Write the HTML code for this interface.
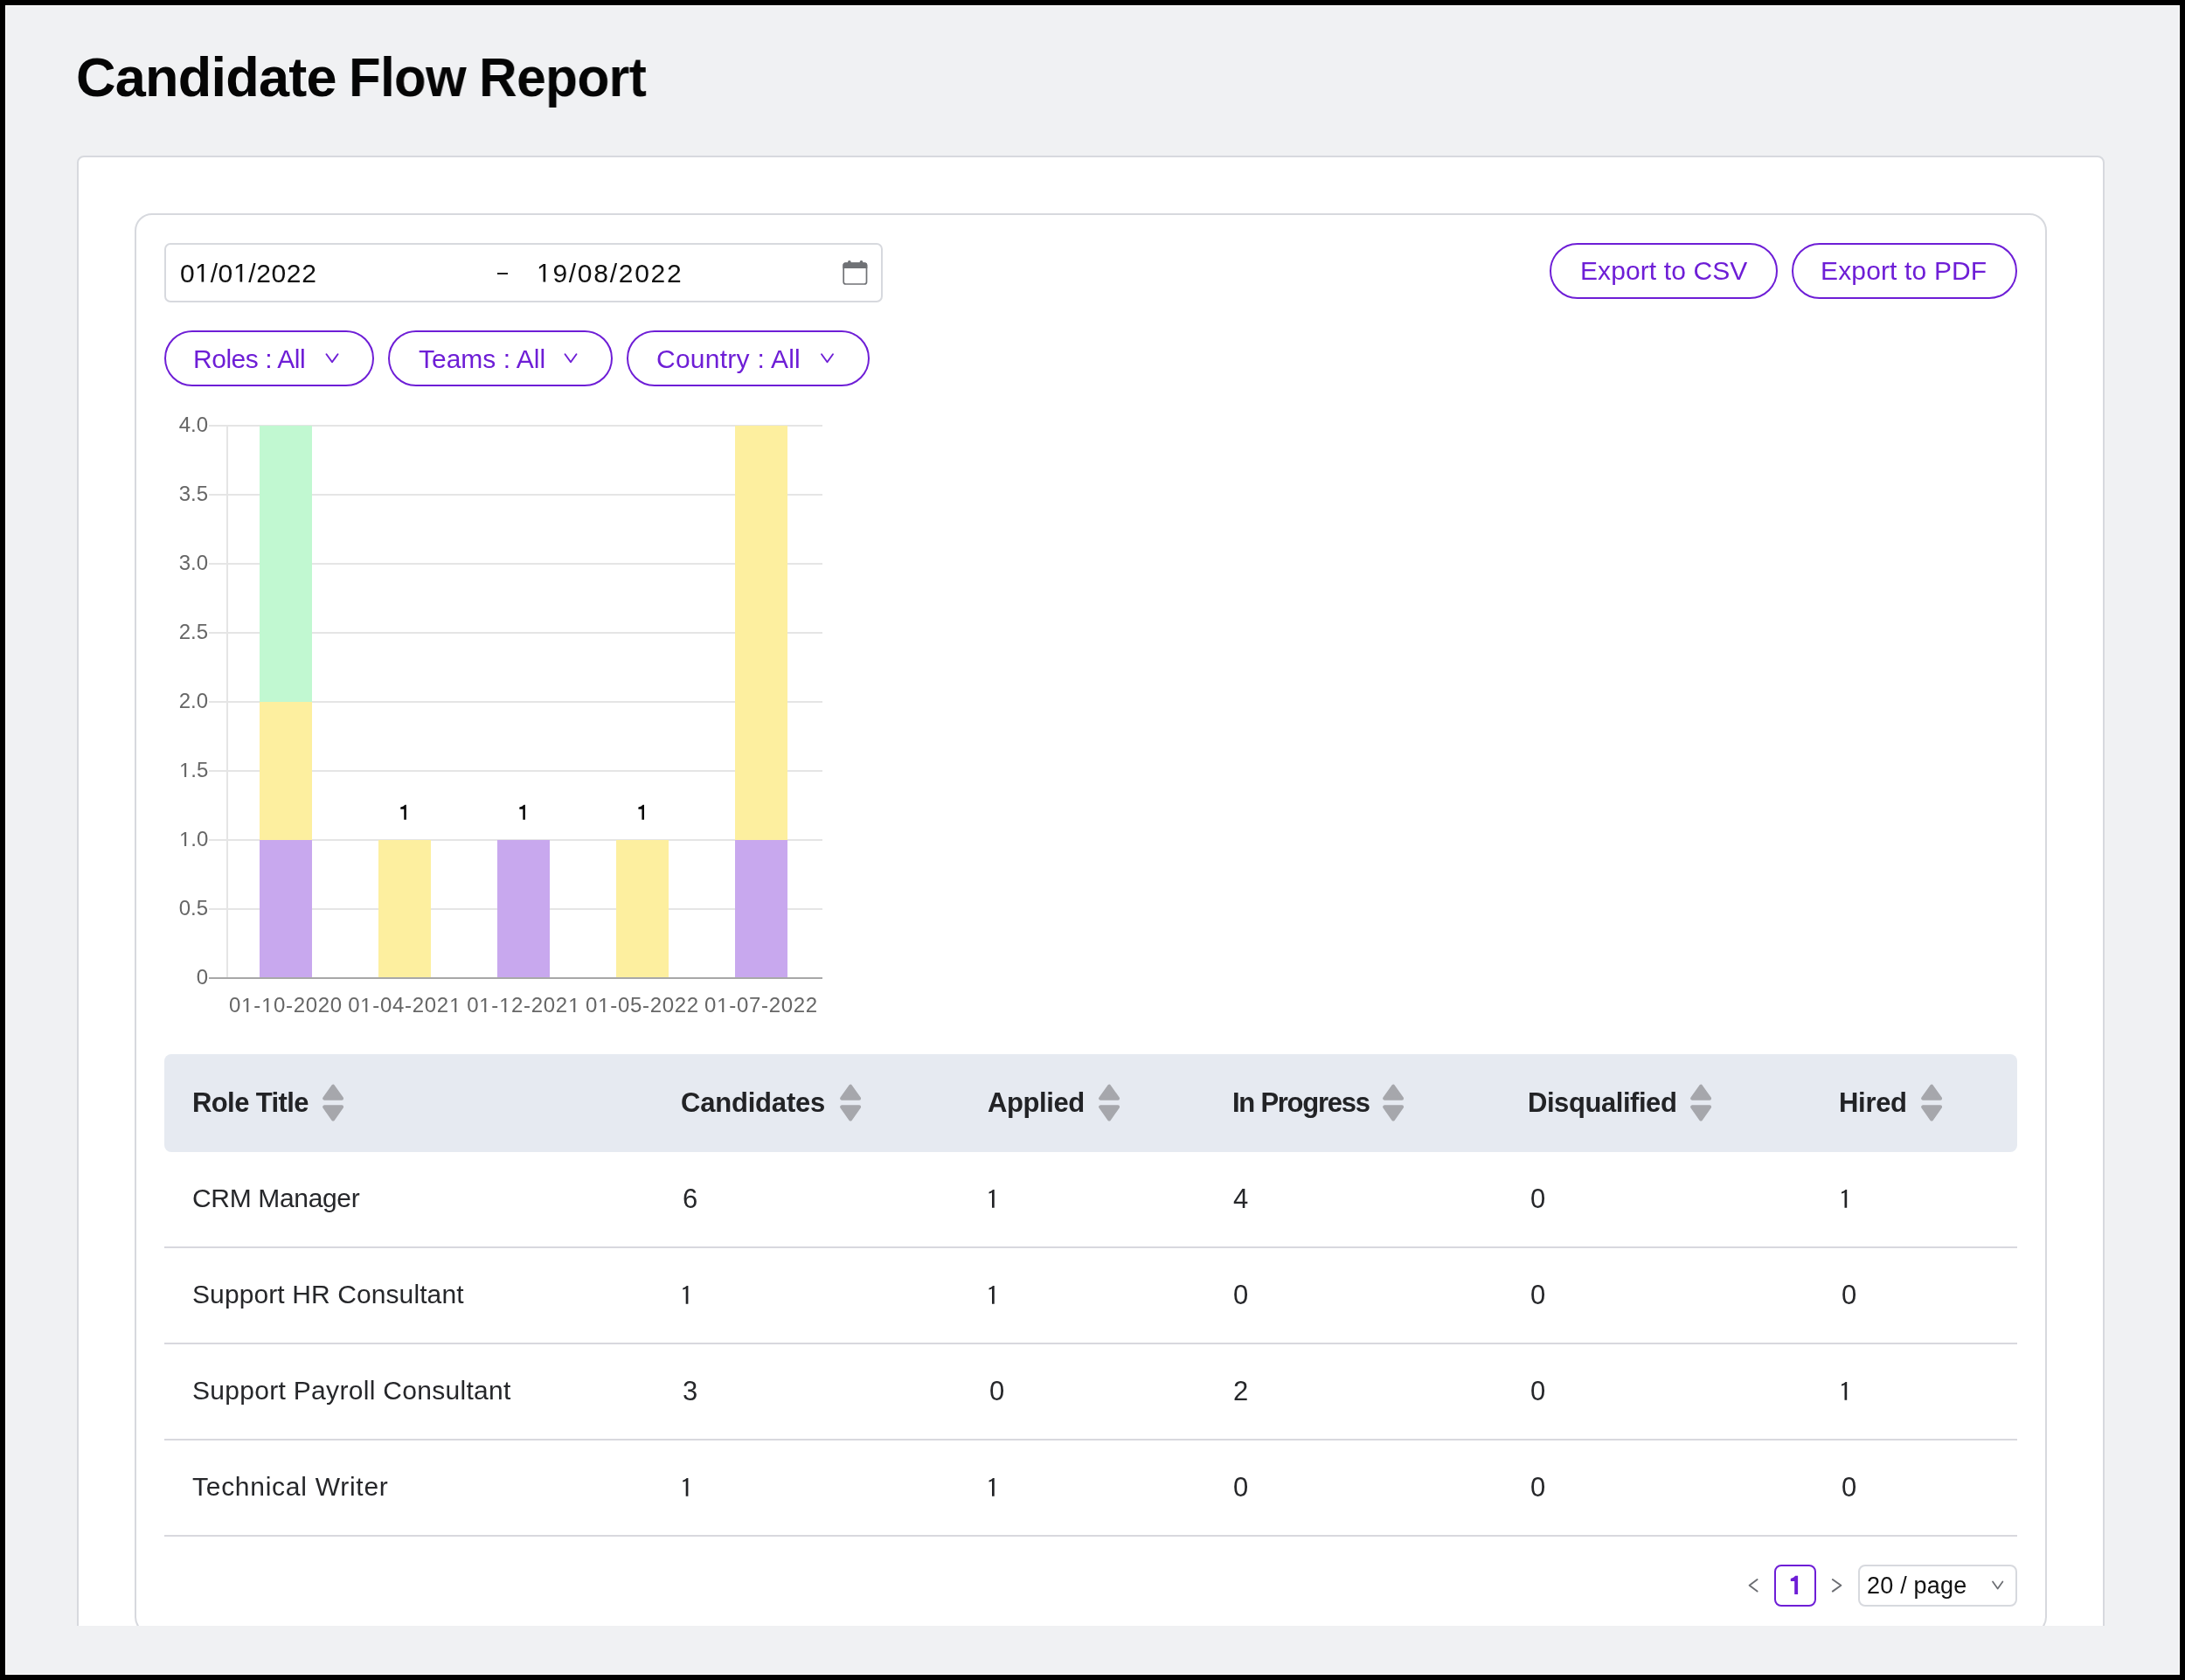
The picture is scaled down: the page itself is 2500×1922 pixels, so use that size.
<!DOCTYPE html>
<html><head><meta charset="utf-8">
<style>
html,body{margin:0;padding:0;}
body{width:2500px;height:1922px;background:#000;position:relative;overflow:hidden;font-family:"Liberation Sans",sans-serif;}
.page{position:absolute;left:6px;top:6px;width:2488px;height:1910px;background:#f0f1f3;border:1px solid #fff;box-sizing:border-box;}
.clip{position:absolute;left:0;top:0;width:2500px;height:1860px;overflow:hidden;}
.t{position:absolute;white-space:nowrap;line-height:1;will-change:transform;}
.outer{position:absolute;left:88px;top:178px;width:2320px;height:1800px;border:2px solid #d7d9de;border-radius:8px;background:#fff;box-sizing:border-box;}
.inner{position:absolute;left:154px;top:244px;width:2188px;height:1626px;border:2px solid #d7d9de;border-radius:20px;background:#fff;box-sizing:border-box;}
.box{position:absolute;box-sizing:border-box;}
.pill{position:absolute;border:2px solid #6e1ed6;border-radius:40px;box-sizing:border-box;}
.p{color:#6e1ed6;font-size:30px;}
.hd{font-size:31px;font-weight:bold;color:#222326;}
.cell{font-size:30px;color:#26272a;}
.one{display:inline-block;width:0.5562em;height:0.688em;vertical-align:baseline;fill:currentColor;}
#d1 .one{margin-right:0.64px;}
#d2 .one{margin-right:1.73px;}
.num{font-size:31px;}
.xl{font-size:24px;color:#666;letter-spacing:0.7px;transform:translateX(-50%);}
.xl .one{margin-right:0.7px;}
.yl{font-size:24px;color:#666;}
.tw{font-size:63px;font-weight:bold;color:#050505;letter-spacing:-0.6px;transform-origin:0 0;}
.sep{position:absolute;left:188px;width:2120px;height:2px;background:#d8d8de;}
</style></head>
<body>
<div class="page"></div>
<div class="t tw" id="tw1" style="left:87px;top:57px;letter-spacing:-0.75px;">Candidate</div><div class="t tw" id="tw2" style="left:398.9px;top:57px;transform:scaleX(0.95);">Flow</div><div class="t tw" id="tw3" style="left:548.1px;top:57px;transform:scaleX(0.959);">Report</div>
<div class="clip">
  <div class="outer"></div>
  <div class="inner"></div>

  <!-- date range input -->
  <div class="box" style="left:188px;top:278px;width:822px;height:68px;border:2px solid #d7d9de;border-radius:7px;background:#fff;"></div>
  <div class="t" id="d1" style="left:206px;top:297.5px;letter-spacing:0.64px;font-size:30px;color:#111;">0<svg class="one" viewBox="0 0 1139 1409"><path d="M515,1409 L696,1409 L696,0 L530,0 L197,229 L197,399 L515,172 Z"/></svg>/0<svg class="one" viewBox="0 0 1139 1409"><path d="M515,1409 L696,1409 L696,0 L530,0 L197,229 L197,399 L515,172 Z"/></svg>/2022</div>
  <div class="box" style="left:569px;top:312px;width:12px;height:2px;background:#222;"></div>
  <div class="t" id="d2" style="left:614px;top:297.5px;letter-spacing:1.73px;font-size:30px;color:#111;"><svg class="one" viewBox="0 0 1139 1409"><path d="M515,1409 L696,1409 L696,0 L530,0 L197,229 L197,399 L515,172 Z"/></svg>9/08/2022</div>
  <svg class="box" style="left:962px;top:296px;" width="32" height="32" viewBox="0 0 32 32">
    <rect x="3.2" y="5.2" width="26.3" height="23.8" rx="2.6" ry="2.6" fill="none" stroke="#707276" stroke-width="1.7"/>
    <path d="M2.4,11 L2.4,7.4 Q2.4,4.4 5.4,4.4 L27.3,4.4 Q30.3,4.4 30.3,7.4 L30.3,11 Z" fill="#707276"/>
    <rect x="8.05" y="2" width="3.5" height="5" rx="1.5" fill="#707276"/>
    <rect x="21.75" y="2" width="3.5" height="5" rx="1.5" fill="#707276"/>
  </svg>

  <!-- export buttons -->
  <div class="pill" style="left:1773px;top:278px;width:261px;height:64px;"></div>
  <div class="t p" id="csv" style="left:1807.5px;top:295px;letter-spacing:0.1px;">Export to CSV</div>
  <div class="pill" style="left:2050px;top:278px;width:258px;height:64px;"></div>
  <div class="t p" id="pdf" style="left:2083px;top:295px;letter-spacing:0.15px;">Export to PDF</div>

  <!-- filter pills -->
  <div class="pill" style="left:188px;top:378px;width:240px;height:64px;"></div>
  <div class="t p" id="roles" style="left:221px;top:395.5px;letter-spacing:-0.47px;">Roles : All</div>
  <div class="pill" style="left:444px;top:378px;width:257px;height:64px;"></div>
  <div class="t p" id="teams" style="left:479px;top:395.5px;">Teams : All</div>
  <div class="pill" style="left:717px;top:378px;width:278px;height:64px;"></div>
  <div class="t p" id="country" style="left:751px;top:395.5px;letter-spacing:0.25px;">Country : All</div>
  <svg class="box" style="left:0;top:0;" width="1000" height="450" viewBox="0 0 1000 450">
    <g fill="none" stroke="#6e1ed6" stroke-width="1.9" stroke-linecap="round" stroke-linejoin="round">
      <polyline points="373.5,405.2 380,414.3 386.5,405.2"/>
      <polyline points="646.5,405.2 653,414.3 659.5,405.2"/>
      <polyline points="940,405.2 946.5,414.3 953,405.2"/>
    </g>
  </svg>

  <!-- chart -->
  <svg class="box" style="left:0;top:0;" width="1000" height="1200" viewBox="0 0 1000 1200">
    <g stroke="#e5e5e5" stroke-width="2">
      <line x1="239" y1="487" x2="941" y2="487"/>
      <line x1="239" y1="566" x2="941" y2="566"/>
      <line x1="239" y1="645" x2="941" y2="645"/>
      <line x1="239" y1="724" x2="941" y2="724"/>
      <line x1="239" y1="803" x2="941" y2="803"/>
      <line x1="239" y1="882" x2="941" y2="882"/>
      <line x1="239" y1="961" x2="941" y2="961"/>
      <line x1="239" y1="1040" x2="941" y2="1040"/>
      <line x1="260" y1="486" x2="260" y2="1119"/>
    </g>
    <g>
      <rect x="297" y="487" width="60" height="316" fill="#c1f8d1"/>
      <rect x="297" y="803" width="60" height="158" fill="#fdef9f"/>
      <rect x="297" y="961" width="60" height="158" fill="#c8a8ee"/>
      <rect x="433" y="961" width="60" height="158" fill="#fdef9f"/>
      <rect x="569" y="961" width="60" height="158" fill="#c8a8ee"/>
      <rect x="705" y="961" width="60" height="158" fill="#fdef9f"/>
      <rect x="841" y="487" width="60" height="474" fill="#fdef9f"/>
      <rect x="841" y="961" width="60" height="158" fill="#c8a8ee"/>
    </g>
    <line x1="239" y1="1119" x2="941" y2="1119" stroke="#a8a8a8" stroke-width="2"/>
    <g font-family="Liberation Sans" font-size="24" fill="#666" text-anchor="end">
      <text x="238" y="494">4.0</text>
      <text x="238" y="573">3.5</text>
      <text x="238" y="652">3.0</text>
      <text x="238" y="731">2.5</text>
      <text x="238" y="810">2.0</text>
      <text x="238" y="1047">0.5</text>
      <text x="238" y="1126">0</text>
    </g>

    <g fill="#0a0a0a">
      <path transform="translate(457.95,920.8)" d="M4.3,16.9 L6.9,16.9 L6.9,0 L5.4,0 Q3.9,2.2 0.3,2.7 L0.3,4.9 L4.3,4.9 Z"/>
      <path transform="translate(594.0,920.8)" d="M4.3,16.9 L6.9,16.9 L6.9,0 L5.4,0 Q3.9,2.2 0.3,2.7 L0.3,4.9 L4.3,4.9 Z"/>
      <path transform="translate(730.1,920.8)" d="M4.3,16.9 L6.9,16.9 L6.9,0 L5.4,0 Q3.9,2.2 0.3,2.7 L0.3,4.9 L4.3,4.9 Z"/>
    </g>
  </svg>

  <!-- chart labels html -->
  <div class="t xl" style="left:327px;top:1137.7px;">0<svg class="one" viewBox="0 0 1139 1409"><path d="M515,1409 L696,1409 L696,0 L530,0 L197,229 L197,399 L515,172 Z"/></svg>-<svg class="one" viewBox="0 0 1139 1409"><path d="M515,1409 L696,1409 L696,0 L530,0 L197,229 L197,399 L515,172 Z"/></svg>0-2020</div>
  <div class="t xl" style="left:463px;top:1137.7px;">0<svg class="one" viewBox="0 0 1139 1409"><path d="M515,1409 L696,1409 L696,0 L530,0 L197,229 L197,399 L515,172 Z"/></svg>-04-202<svg class="one" viewBox="0 0 1139 1409"><path d="M515,1409 L696,1409 L696,0 L530,0 L197,229 L197,399 L515,172 Z"/></svg></div>
  <div class="t xl" style="left:599px;top:1137.7px;">0<svg class="one" viewBox="0 0 1139 1409"><path d="M515,1409 L696,1409 L696,0 L530,0 L197,229 L197,399 L515,172 Z"/></svg>-<svg class="one" viewBox="0 0 1139 1409"><path d="M515,1409 L696,1409 L696,0 L530,0 L197,229 L197,399 L515,172 Z"/></svg>2-202<svg class="one" viewBox="0 0 1139 1409"><path d="M515,1409 L696,1409 L696,0 L530,0 L197,229 L197,399 L515,172 Z"/></svg></div>
  <div class="t xl" style="left:735px;top:1137.7px;">0<svg class="one" viewBox="0 0 1139 1409"><path d="M515,1409 L696,1409 L696,0 L530,0 L197,229 L197,399 L515,172 Z"/></svg>-05-2022</div>
  <div class="t xl" style="left:871px;top:1137.7px;">0<svg class="one" viewBox="0 0 1139 1409"><path d="M515,1409 L696,1409 L696,0 L530,0 L197,229 L197,399 L515,172 Z"/></svg>-07-2022</div>
  <div class="t yl" style="right:2262px;top:947.7px;"><svg class="one" viewBox="0 0 1139 1409"><path d="M515,1409 L696,1409 L696,0 L530,0 L197,229 L197,399 L515,172 Z"/></svg>.0</div>
  <div class="t yl" style="right:2262px;top:868.7px;"><svg class="one" viewBox="0 0 1139 1409"><path d="M515,1409 L696,1409 L696,0 L530,0 L197,229 L197,399 L515,172 Z"/></svg>.5</div>
  <!-- table header -->
  <div class="box" style="left:188px;top:1206px;width:2120px;height:112px;background:#e6eaf1;border-radius:8px;"></div>
  <div class="t hd" id="h1" style="left:220px;top:1246px;letter-spacing:-0.6px;">Role Title</div>
  <div class="t hd" id="h2" style="left:779px;top:1246px;letter-spacing:-0.2px;">Candidates</div>
  <div class="t hd" id="h3" style="left:1130px;top:1246px;letter-spacing:-0.4px;">Applied</div>
  <div class="t hd" id="h4" style="left:1410px;top:1246px;letter-spacing:-1.26px;">In Progress</div>
  <div class="t hd" id="h5" style="left:1748px;top:1246px;letter-spacing:-0.44px;">Disqualified</div>
  <div class="t hd" id="h6" style="left:2104px;top:1246px;letter-spacing:-0.3px;">Hired</div>
  <svg class="box" style="left:0;top:1200px;" width="2500" height="120" viewBox="0 1200 2500 120">
    <defs>
      <g id="sorter">
        <polygon points="2.1,15.7 22.1,15.7 12.1,1.6" fill="#a6a7ac" stroke="#a6a7ac" stroke-width="4" stroke-linejoin="round"/>
        <polygon points="2.1,25.3 22.1,25.3 12.1,39.5" fill="#a6a7ac" stroke="#a6a7ac" stroke-width="4" stroke-linejoin="round"/>
      </g>
    </defs>
    <use href="#sorter" x="369" y="1241"/>
    <use href="#sorter" x="961" y="1241"/>
    <use href="#sorter" x="1257" y="1241"/>
    <use href="#sorter" x="1582" y="1241"/>
    <use href="#sorter" x="1934" y="1241"/>
    <use href="#sorter" x="2198" y="1241"/>
  </svg>

  <!-- rows -->
  <div class="t cell" style="left:220px;top:1356px;letter-spacing:-0.34px;">CRM Manager</div>
  <div class="t cell num" style="left:781px;top:1356px;">6</div>
  <div class="t cell num" style="left:1411px;top:1356px;">4</div>
  <div class="t cell num" style="left:1751px;top:1356px;">0</div>
  <div class="sep" style="top:1426px;"></div>

  <div class="t cell" style="left:220px;top:1466px;letter-spacing:0.1px;">Support HR Consultant</div>
  <div class="t cell num" style="left:1411px;top:1466px;">0</div>
  <div class="t cell num" style="left:1751px;top:1466px;">0</div>
  <div class="t cell num" style="left:2107px;top:1466px;">0</div>
  <div class="sep" style="top:1536px;"></div>

  <div class="t cell" style="left:220px;top:1576px;letter-spacing:0.3px;">Support Payroll Consultant</div>
  <div class="t cell num" style="left:781px;top:1576px;">3</div>
  <div class="t cell num" style="left:1132px;top:1576px;">0</div>
  <div class="t cell num" style="left:1411px;top:1576px;">2</div>
  <div class="t cell num" style="left:1751px;top:1576px;">0</div>
  <div class="sep" style="top:1646px;"></div>

  <div class="t cell" style="left:220px;top:1686px;letter-spacing:0.73px;">Technical Writer</div>
  <div class="t cell num" style="left:1411px;top:1686px;">0</div>
  <div class="t cell num" style="left:1751px;top:1686px;">0</div>
  <div class="t cell num" style="left:2107px;top:1686px;">0</div>
  <div class="sep" style="top:1756px;"></div>

  <svg class="box" style="left:0;top:0;" width="2500" height="1800" viewBox="0 0 2500 1800">
  <g fill="#222326">
    <path transform="translate(1131.3,1361)" d="M3.7,20.8 L6.4,20.8 L6.4,0 L4.8,0 Q3.4,1.9 0.2,2.7 L0.2,4.4 Q2.3,4.4 3.7,3.3 Z"/>
    <path transform="translate(2106.8,1361)" d="M3.7,20.8 L6.4,20.8 L6.4,0 L4.8,0 Q3.4,1.9 0.2,2.7 L0.2,4.4 Q2.3,4.4 3.7,3.3 Z"/>
    <path transform="translate(781.0,1471)" d="M3.7,20.8 L6.4,20.8 L6.4,0 L4.8,0 Q3.4,1.9 0.2,2.7 L0.2,4.4 Q2.3,4.4 3.7,3.3 Z"/>
    <path transform="translate(1131.3,1471)" d="M3.7,20.8 L6.4,20.8 L6.4,0 L4.8,0 Q3.4,1.9 0.2,2.7 L0.2,4.4 Q2.3,4.4 3.7,3.3 Z"/>
    <path transform="translate(2106.8,1581)" d="M3.7,20.8 L6.4,20.8 L6.4,0 L4.8,0 Q3.4,1.9 0.2,2.7 L0.2,4.4 Q2.3,4.4 3.7,3.3 Z"/>
    <path transform="translate(781.0,1691)" d="M3.7,20.8 L6.4,20.8 L6.4,0 L4.8,0 Q3.4,1.9 0.2,2.7 L0.2,4.4 Q2.3,4.4 3.7,3.3 Z"/>
    <path transform="translate(1131.3,1691)" d="M3.7,20.8 L6.4,20.8 L6.4,0 L4.8,0 Q3.4,1.9 0.2,2.7 L0.2,4.4 Q2.3,4.4 3.7,3.3 Z"/>
  </g></svg>
  <!-- pagination -->
  <svg class="box" style="left:1990px;top:1795px;" width="130" height="40" viewBox="1990 1795 130 40">
    <polyline points="2010.6,1807 2001.6,1813.8 2010.6,1820.6" fill="none" stroke="#6b6d72" stroke-width="1.9" stroke-linecap="round" stroke-linejoin="round"/>
    <polyline points="2096.8,1807 2106.4,1813.8 2096.8,1820.6" fill="none" stroke="#6b6d72" stroke-width="1.9" stroke-linecap="round" stroke-linejoin="round"/>
  </svg>
  <div class="box" style="left:2030px;top:1790px;width:48px;height:48px;border:2px solid #6e1ed6;border-radius:8px;"></div>
  <svg class="box" style="left:2040px;top:1798px;" width="24" height="30" viewBox="2040 1798 24 30"><path d="M2053.2,1824 L2057.1,1824 L2057.1,1802.8 L2054.2,1802.8 Q2052.4,1805 2048.8,1806 L2048.8,1809 L2053.2,1809 Z" fill="#6e1ed6"/></svg>
  <div class="box" style="left:2126px;top:1790px;width:182px;height:48px;border:2px solid #d7d9de;border-radius:8px;background:#fff;"></div>
  <div class="t" id="perpage" style="left:2136px;top:1801px;font-size:27px;color:#111;letter-spacing:0.2px;">20 / page</div>
  <svg class="box" style="left:2270px;top:1800px;" width="30" height="30" viewBox="2270 1800 30 30">
    <polyline points="2280,1809.4 2285.7,1817.6 2291.4,1809.4" fill="none" stroke="#6b6d72" stroke-width="1.7" stroke-linecap="round" stroke-linejoin="round"/>
  </svg>
</div>
</body></html>
